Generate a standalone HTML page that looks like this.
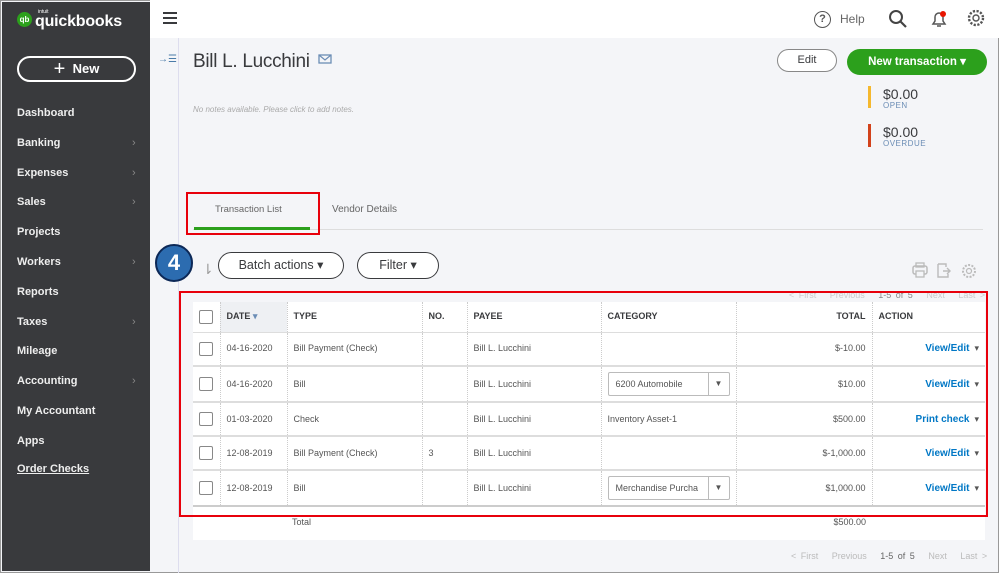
<!DOCTYPE html>
<html><head><meta charset="utf-8"><style>
*{box-sizing:border-box;margin:0;padding:0}
body{width:999px;height:573px;overflow:hidden;background:#f4f5f8;font-family:"Liberation Sans",sans-serif;position:relative;color:#393a3d}
.a{position:absolute}
.side{left:2px;top:2px;width:148px;height:569px;background:#393a3d}
.nav{left:17px;color:#eee;font-size:11px;font-weight:bold}
.chev{left:132px;color:#888;font-size:11px}
.top{left:150px;top:0;width:849px;height:38px;background:#fff}
.rail{left:178px;top:38px;width:1px;height:535px;background:#dde}
.btn{border:1.5px solid #393a3d;border-radius:14px;background:#fff;font-size:12.5px;text-align:center}
table{border-collapse:collapse;font-size:9px;color:#555;line-height:11px}
td{border-right:1px dotted #ccc;padding:0 6px}
.cb{display:inline-block;width:14px;height:14px;border:1px solid #888;border-radius:2px;background:#fff;vertical-align:middle}
.lk{color:#0077c5;font-weight:bold;font-size:10px}
.dd{border:1px solid #bbb;border-radius:2px;height:24px;display:flex;align-items:center;font-size:9px}
</style></head><body>
<div class="a" style="left:0;top:0;width:999px;height:573px;border:1px solid #999"></div>
<div class="a side"></div>
<div class="a" style="left:17px;top:12px;width:15px;height:15px;border-radius:50%;background:#2ca01c;color:#fff;font-size:8px;font-weight:bold;text-align:center;line-height:15px">qb</div>
<div class="a" style="left:35px;top:13px;color:#fff;font-size:16px;font-weight:bold;letter-spacing:-.2px">quickbooks</div>
<div class="a" style="left:38px;top:9px;color:#fff;font-size:5px">intuit</div>
<div class="a" style="left:17px;top:56px;width:119px;height:26px;border:2px solid #fff;border-radius:13px;color:#fff;font-size:13px;font-weight:bold;text-align:center;line-height:22px"><span style="font-size:20px;font-weight:normal;vertical-align:-2px">+</span>&nbsp; New</div>
<div class="a nav" style="top:107px">Dashboard</div>
<div class="a nav" style="top:137px">Banking</div><div class="a chev" style="top:137px">›</div>
<div class="a nav" style="top:167px">Expenses</div><div class="a chev" style="top:167px">›</div>
<div class="a nav" style="top:196px">Sales</div><div class="a chev" style="top:196px">›</div>
<div class="a nav" style="top:226px">Projects</div>
<div class="a nav" style="top:256px">Workers</div><div class="a chev" style="top:256px">›</div>
<div class="a nav" style="top:286px">Reports</div>
<div class="a nav" style="top:316px">Taxes</div><div class="a chev" style="top:316px">›</div>
<div class="a nav" style="top:345px">Mileage</div>
<div class="a nav" style="top:375px">Accounting</div><div class="a chev" style="top:375px">›</div>
<div class="a nav" style="top:405px">My Accountant</div>
<div class="a nav" style="top:435px">Apps</div>
<div class="a nav" style="top:463px;text-decoration:underline">Order Checks</div>
<div class="a top"></div>
<div class="a" style="left:163px;top:12px;width:14px;height:2px;background:#393a3d;box-shadow:0 5px 0 #393a3d,0 10px 0 #393a3d"></div>
<div class="a" style="left:814px;top:11px;width:17px;height:17px;border:1.5px solid #555;border-radius:50%;font-size:11px;text-align:center;line-height:14px;font-weight:bold;color:#555">?</div>
<div class="a" style="left:840px;top:12px;font-size:12px;color:#666">Help</div>
<svg class="a" style="left:888px;top:9px" width="20" height="20"><circle cx="8" cy="8" r="6" fill="none" stroke="#444" stroke-width="2"/><line x1="12" y1="12" x2="18" y2="18" stroke="#444" stroke-width="2.2"/></svg>
<svg class="a" style="left:929px;top:9px" width="20" height="20"><path d="M4 15h12l-2-3V8a4 4 0 0 0-8 0v4z" fill="none" stroke="#555" stroke-width="1.5"/><path d="M8 17h4" stroke="#555" stroke-width="1.5"/><circle cx="14" cy="5" r="3" fill="#e81500"/></svg>
<svg class="a" style="left:966px;top:8px" width="20" height="20"><circle cx="10" cy="10" r="3" fill="none" stroke="#555" stroke-width="1.4"/><circle cx="10" cy="10" r="7" fill="none" stroke="#555" stroke-width="2.4" stroke-dasharray="2.2 1.5"/></svg>
<div class="a rail"></div>
<div class="a" style="left:158px;top:54px;color:#4a7ba8;font-size:10px">→☰</div>
<div class="a" style="left:193px;top:51px;font-size:19px;color:#393a3d;letter-spacing:-.3px">Bill L. Lucchini</div>
<svg class="a" style="left:318px;top:54px" width="14" height="10"><rect x="1" y="1" width="12" height="8" fill="none" stroke="#6b8db5" stroke-width="1.3"/><path d="M1 1l6 5 6-5" fill="none" stroke="#6b8db5" stroke-width="1.2"/></svg>
<div class="a" style="left:193px;top:105px;font-size:8px;font-style:italic;color:#aaa">No notes available. Please click to add notes.</div>
<div class="a btn" style="left:777px;top:49px;width:60px;height:23px;font-size:11px;line-height:20px;border-color:#888">Edit</div>
<div class="a" style="left:847px;top:49px;width:140px;height:26px;background:#2ca01c;border-radius:13px;color:#fff;font-size:11.5px;font-weight:bold;text-align:center;line-height:26px">New transaction ▾</div>
<div class="a" style="left:868px;top:86px;width:3px;height:22px;background:#f5b82e"></div>
<div class="a" style="left:883px;top:86px;font-size:14px">$0.00</div>
<div class="a" style="left:883px;top:101px;font-size:8px;color:#6b8db5;letter-spacing:.5px">OPEN</div>
<div class="a" style="left:868px;top:124px;width:3px;height:23px;background:#d2421b"></div>
<div class="a" style="left:883px;top:124px;font-size:14px">$0.00</div>
<div class="a" style="left:883px;top:139px;font-size:8px;color:#6b8db5;letter-spacing:.5px">OVERDUE</div>
<div class="a" style="left:193px;top:229px;width:790px;height:1px;background:#ddd"></div>
<div class="a" style="left:215px;top:204px;font-size:9.5px;color:#666">Transaction List</div>
<div class="a" style="left:332px;top:204px;font-size:10px;color:#666">Vendor Details</div>
<div class="a" style="left:194px;top:227px;width:116px;height:3px;background:#2ca01c"></div>
<div class="a" style="left:186px;top:192px;width:134px;height:43px;border:2.5px solid #e8000b"></div>
<div class="a" style="left:155px;top:244px;width:38px;height:38px;border-radius:50%;background:#2c6cb0;border:2.5px solid #0c2857;color:#fff;font-size:22px;font-weight:bold;text-align:center;line-height:33px">4</div>
<div class="a" style="left:202px;top:261px;color:#999;font-size:14px">⇂</div>
<div class="a btn" style="left:218px;top:252px;width:126px;height:27px;line-height:24px">Batch actions ▾</div>
<div class="a btn" style="left:357px;top:252px;width:82px;height:27px;line-height:24px">Filter ▾</div>
<svg class="a" style="left:910px;top:261px" width="70" height="20"><rect x="3" y="5" width="14" height="8" rx="2" fill="none" stroke="#bbb" stroke-width="1.5"/><rect x="6" y="2" width="8" height="4" fill="none" stroke="#bbb" stroke-width="1.3"/><rect x="6" y="10" width="8" height="6" fill="#f4f5f8" stroke="#bbb" stroke-width="1.3"/><path d="M28 3h8v3M28 3v13h10v-3M33 10h7M37 7l3 3-3 3" fill="none" stroke="#bbb" stroke-width="1.4"/><circle cx="59" cy="10" r="2.5" fill="none" stroke="#bbb" stroke-width="1.2"/><circle cx="59" cy="10" r="6" fill="none" stroke="#bbb" stroke-width="2" stroke-dasharray="2 1.4"/></svg>
<div class="a" style="left:789px;top:290px;font-size:9px;color:#ccc;word-spacing:2px">&lt; First &nbsp; Previous &nbsp; <span style="color:#888">1-5 of 5</span> &nbsp; Next &nbsp; Last &gt;</div>
<div class="a" style="left:193px;top:302px;width:792px;height:238px;background:#fff"></div>
<table class="a" style="left:193px;top:302px;width:792px">
<colgroup><col style="width:27px"><col style="width:67px"><col style="width:135px"><col style="width:45px"><col style="width:134px"><col style="width:135px"><col style="width:136px"><col style="width:113px"></colgroup>
<tr style="font-weight:bold;color:#393a3d;border-bottom:1px solid #ddd"><td style="height:30px"><span class="cb"></span></td><td style="background:#eef0f3">DATE <span style="color:#6b8db5">▾</span></td><td>TYPE</td><td>NO.</td><td>PAYEE</td><td>CATEGORY</td><td style="text-align:right">TOTAL</td><td style="border:0">ACTION</td></tr>
<tr style="border-bottom:2px solid #ddd"><td style="height:34px"><span class="cb"></span></td><td>04-16-2020</td><td>Bill Payment (Check)</td><td></td><td>Bill L. Lucchini</td><td></td><td style="text-align:right">$-10.00</td><td style="text-align:right;border:0"><span class="lk">View/Edit</span> &nbsp;▾</td></tr>
<tr style="border-bottom:2px solid #ddd"><td style="height:36px"><span class="cb"></span></td><td>04-16-2020</td><td>Bill</td><td></td><td>Bill L. Lucchini</td><td><div class="dd"><span style="flex:1;padding-left:7px">6200 Automobile</span><span style="width:21px;border-left:1px solid #bbb;height:100%;text-align:center;line-height:22px;font-size:8px">▼</span></div></td><td style="text-align:right">$10.00</td><td style="text-align:right;border:0"><span class="lk">View/Edit</span> &nbsp;▾</td></tr>
<tr style="border-bottom:2px solid #ddd"><td style="height:34px"><span class="cb"></span></td><td>01-03-2020</td><td>Check</td><td></td><td>Bill L. Lucchini</td><td>Inventory Asset-1</td><td style="text-align:right">$500.00</td><td style="text-align:right;border:0"><span class="lk">Print check</span> &nbsp;▾</td></tr>
<tr style="border-bottom:2px solid #ddd"><td style="height:34px"><span class="cb"></span></td><td>12-08-2019</td><td>Bill Payment (Check)</td><td>3</td><td>Bill L. Lucchini</td><td></td><td style="text-align:right">$-1,000.00</td><td style="text-align:right;border:0"><span class="lk">View/Edit</span> &nbsp;▾</td></tr>
<tr style="border-bottom:2px solid #ccc"><td style="height:36px"><span class="cb"></span></td><td>12-08-2019</td><td>Bill</td><td></td><td>Bill L. Lucchini</td><td><div class="dd"><span style="flex:1;padding-left:7px;overflow:hidden;white-space:nowrap">Merchandise Purcha</span><span style="width:21px;flex:none;border-left:1px solid #bbb;height:100%;text-align:center;line-height:22px;font-size:8px">▼</span></div></td><td style="text-align:right">$1,000.00</td><td style="text-align:right;border:0"><span class="lk">View/Edit</span> &nbsp;▾</td></tr>
</table>
<div class="a" style="left:292px;top:517px;font-size:9px;color:#555">Total</div>
<div class="a" style="left:820px;top:517px;width:46px;text-align:right;font-size:9px;color:#555">$500.00</div>
<div class="a" style="left:179px;top:291px;width:809px;height:226px;border:2.5px solid #e8000b"></div>
<div class="a" style="left:791px;top:551px;font-size:9px;color:#bbb;word-spacing:2px">&lt; First &nbsp; Previous &nbsp; <span style="color:#666">1-5 of 5</span> &nbsp; Next &nbsp; Last &gt;</div>
</body></html>
